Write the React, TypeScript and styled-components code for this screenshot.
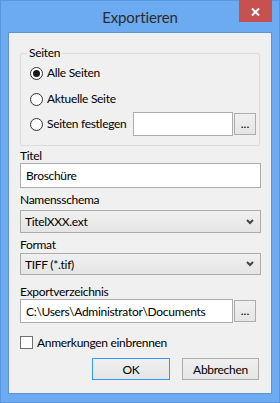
import React from "react";
import styled, { createGlobalStyle } from "styled-components";

const GlobalStyle = createGlobalStyle`
  html, body { margin: 0; padding: 0; }
  body {
    font-family: "Lato", "Segoe UI", sans-serif;
    font-size: 12px;
    letter-spacing: -0.3px;
    color: #000;
  }
  * { box-sizing: border-box; }
`;

const Window = styled.div`
  width: 280px;
  height: 403px;
  background: #6cabf1;
  border: 1px solid #5a96dc;
  display: flex;
  flex-direction: column;
`;

const TitleBar = styled.div`
  height: 31px;
  flex: none;
  display: grid;
  grid-template-columns: 1fr auto 1fr;
  align-items: start;
`;

const Title = styled.div`
  grid-column: 2;
  font-size: 15px;
  letter-spacing: -0.1px;
  line-height: 20px;
  margin-top: 6px;
  color: #2b2b2b;
`;

const CloseButton = styled.div`
  grid-column: 3;
  justify-self: end;
  width: 33px;
  height: 22px;
  margin-top: -1px;
  margin-right: 7px;
  background: #c75050;
  display: flex;
  align-items: center;
  justify-content: center;
  padding-top: 2px;
`;

const Client = styled.div`
  flex: 1;
  margin: 0 7px 8px 7px;
  background: #f0f0f0;
  border: 1px solid #5d93d3;
  padding: 12px 10px 0 11px;
  display: flex;
  flex-direction: column;
`;

const Group = styled.div`
  margin-top: 8px;
  margin-right: 1px;
  border: 1px solid #dcdcdc;
  border-radius: 2px;
  padding: 0 3px 9px 9px;
`;

const Legend = styled.div`
  width: fit-content;
  margin: -9px 0 0 -3px;
  padding: 0 2px;
  line-height: 16px;
  background: #f0f0f0;
`;

const OptionRow = styled.div<{ $gap: number; $h: number }>`
  display: flex;
  align-items: center;
  height: ${(p) => p.$h}px;
  margin-top: ${(p) => p.$gap}px;
`;

const RadioLabel = styled.label<{ $grow?: boolean }>`
  display: flex;
  align-items: center;
  gap: 4px;
  line-height: 16px;
  white-space: nowrap;
  ${(p) => (p.$grow ? "flex: 1;" : "")}
`;

const RadioCircle = styled.span<{ $checked?: boolean }>`
  width: 13px;
  height: 13px;
  border-radius: 50%;
  border: 1px solid #333;
  background: #fff;
  display: flex;
  align-items: center;
  justify-content: center;
  flex: none;
  &::after {
    content: "";
    display: ${(p) => (p.$checked ? "block" : "none")};
    width: 7px;
    height: 7px;
    border-radius: 50%;
    background: #1a1a1a;
  }
`;

const CheckBox = styled.span`
  width: 13px;
  height: 13px;
  border: 1px solid #707070;
  background: #fff;
  flex: none;
`;

const TextBox = styled.div<{ $w?: number; $grow?: boolean; $h: number }>`
  ${(p) => (p.$w ? `width: ${p.$w}px; flex: none;` : p.$grow ? "flex: 1;" : "")}
  height: ${(p) => p.$h}px;
  border: 1px solid #abadb3;
  background: #fff;
  padding-left: 5px;
  display: flex;
  align-items: center;
  white-space: nowrap;
  overflow: hidden;
`;

const SmallButton = styled.div<{ $right?: number }>`
  width: 22px;
  height: 22px;
  margin-left: 1px;
  margin-right: ${(p) => p.$right ?? 0}px;
  border: 1px solid #acacac;
  background: linear-gradient(#f0f0f0, #e5e5e5);
  display: flex;
  align-items: flex-end;
  justify-content: center;
  line-height: 16px;
  padding-bottom: 2px;
  letter-spacing: 0;
  flex: none;
`;

const FieldLabel = styled.div<{ $top: number; $bottom: number }>`
  line-height: 15px;
  height: 15px;
  margin-top: ${(p) => p.$top}px;
  margin-bottom: ${(p) => p.$bottom}px;
`;

const ComboBox = styled.div<{ $h: number }>`
  height: ${(p) => p.$h}px;
  border: 1px solid #acacac;
  background: linear-gradient(#f0f0f0, #e5e5e5);
  padding: 0 6px 0 4px;
  display: flex;
  align-items: center;
  justify-content: space-between;
`;

const InputRow = styled.div`
  display: flex;
  align-items: center;
`;

const CheckRow = styled.label`
  display: flex;
  align-items: center;
  gap: 4px;
  height: 16px;
  margin-top: 11px;
`;

const ButtonRow = styled.div`
  display: flex;
  justify-content: flex-end;
  gap: 12px;
  margin-top: 8px;
  margin-right: 2px;
`;

const DialogButton = styled.div<{ $default?: boolean; $w: number }>`
  width: ${(p) => p.$w}px;
  height: 22px;
  border: 1px solid ${(p) => (p.$default ? "#3399ff" : "#acacac")};
  background: linear-gradient(#f0f0f0, #e5e5e5);
  display: flex;
  align-items: center;
  justify-content: center;
`;

const Chevron = () => (
  <svg width="8" height="6" viewBox="0 0 8 6">
    <polyline points="1,1 4,4 7,1" fill="none" stroke="#444" strokeWidth="2" />
  </svg>
);

export default function App() {
  return (
    <>
      <GlobalStyle />
      <Window>
        <TitleBar>
          <Title>Exportieren</Title>
          <CloseButton>
            <svg width="9" height="8" viewBox="0 0 9 8">
              <path d="M1 0.5 L8 7.5 M8 0.5 L1 7.5" stroke="#fff" strokeWidth="2" />
            </svg>
          </CloseButton>
        </TitleBar>
        <Client>
          <Group>
            <Legend>Seiten</Legend>
            <OptionRow $gap={4} $h={16}>
              <RadioLabel>
                <RadioCircle $checked />
                Alle Seiten
              </RadioLabel>
            </OptionRow>
            <OptionRow $gap={10} $h={16}>
              <RadioLabel>
                <RadioCircle />
                Aktuelle Seite
              </RadioLabel>
            </OptionRow>
            <OptionRow $gap={5} $h={24}>
              <RadioLabel $grow>
                <RadioCircle />
                Seiten festlegen
              </RadioLabel>
              <TextBox $w={100} $h={24} />
              <SmallButton>...</SmallButton>
            </OptionRow>
          </Group>

          <FieldLabel $top={2} $bottom={0}>Titel</FieldLabel>
          <TextBox $h={25}>Broschüre</TextBox>

          <FieldLabel $top={4} $bottom={3}>Namensschema</FieldLabel>
          <ComboBox $h={23}>
            TitelXXX.ext
            <Chevron />
          </ComboBox>

          <FieldLabel $top={4} $bottom={1}>Format</FieldLabel>
          <ComboBox $h={22}>
            TIFF (*.tif)
            <Chevron />
          </ComboBox>

          <FieldLabel $top={9} $bottom={0}>Exportverzeichnis</FieldLabel>
          <InputRow>
            <TextBox $grow $h={24}>C:\Users\Administrator\Documents</TextBox>
            <SmallButton $right={5}>...</SmallButton>
          </InputRow>

          <CheckRow>
            <CheckBox />
            Anmerkungen einbrennen
          </CheckRow>

          <ButtonRow>
            <DialogButton $default $w={78}>OK</DialogButton>
            <DialogButton $w={77}>Abbrechen</DialogButton>
          </ButtonRow>
        </Client>
      </Window>
    </>
  );
}
